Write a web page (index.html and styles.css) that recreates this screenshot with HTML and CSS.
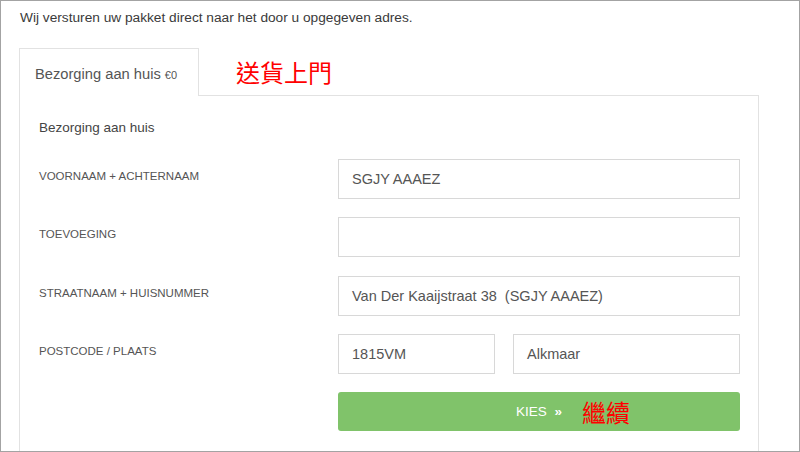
FILE: index.html
```html
<!DOCTYPE html>
<html lang="nl">
<head>
<meta charset="utf-8">
<link rel="stylesheet" href="styles.css">
</head>
<body>
<div class="frame">
  <p class="intro">Wij versturen uw pakket direct naar het door u opgegeven adres.</p>
  <div class="tabs">
    <div class="tab">Bezorging aan huis <span class="price">€0</span></div>
    <div class="tab-fill"><span class="note note-tab">送貨上門</span></div>
  </div>
  <div class="panel">
    <h2 class="panel-title">Bezorging aan huis</h2>
    <div class="form">
      <label class="lbl">VOORNAAM + ACHTERNAAM</label>
      <div class="field">SGJY AAAEZ</div>
      <label class="lbl">TOEVOEGING</label>
      <div class="field"></div>
      <label class="lbl">STRAATNAAM + HUISNUMMER</label>
      <div class="field">Van Der Kaaijstraat 38 &nbsp;(SGJY AAAEZ)</div>
      <label class="lbl">POSTCODE / PLAATS</label>
      <div class="pair">
        <div class="field">1815VM</div>
        <div class="field">Alkmaar</div>
      </div>
      <span></span>
      <div class="btn">
        <span></span>
        <span class="btn-label">KIES <span class="chev">»</span></span>
        <span class="note note-btn">繼續</span>
      </div>
    </div>
  </div>
</div>
</body>
</html>
```
FILE: styles.css
```css
html, body {
  margin: 0;
  padding: 0;
  background: #fff;
}
body {
  font-family: "Liberation Sans", Arial, sans-serif;
  color: #444;
}
.frame {
  width: 800px;
  height: 452px;
  box-sizing: border-box;
  border: 1px solid #a3a3a3;
  padding: 0 40px 0 18px;
  display: flex;
  flex-direction: column;
  overflow: hidden;
}
.intro {
  margin: 0;
  padding: 8px 0 0 1px;
  height: 47px;
  flex: none;
  box-sizing: border-box;
  font-size: 13.7px;
  line-height: 18px;
  color: #3a3a3a;
}
.tabs {
  display: flex;
  height: 48px;
  flex: none;
}
.tab {
  width: 180px;
  box-sizing: border-box;
  border: 1px solid #e2e2e2;
  border-bottom: none;
  padding: 15px 0 0 15px;
  font-size: 14.7px;
  line-height: 20px;
  color: #555;
}
.price {
  font-size: 11px;
}
.tab-fill {
  flex: 1;
  border-bottom: 1px solid #e2e2e2;
  padding: 10px 0 0 37px;
}
.note {
  font-family: "Noto Sans CJK TC", "Noto Sans CJK SC", sans-serif;
  color: #ff0000;
  font-size: 24px;
  line-height: 28px;
}
.panel {
  flex: 1;
  border-left: 1px solid #e2e2e2;
  border-right: 1px solid #e2e2e2;
  padding: 22px 18px 0 19px;
}
.panel-title {
  margin: 0 0 21px;
  font-weight: normal;
  font-size: 13.5px;
  line-height: 20px;
  color: #444;
}
.form {
  display: grid;
  grid-template-columns: 299px 1fr;
  row-gap: 18.3px;
}
.lbl {
  font-size: 11.5px;
  line-height: 14px;
  padding-top: 10px;
  color: #555;
}
.field {
  height: 40px;
  box-sizing: border-box;
  border: 1px solid #d8d8d8;
  padding: 0 13px;
  font-size: 14.5px;
  line-height: 38px;
  color: #555;
}
.pair {
  display: grid;
  grid-template-columns: 157px 1fr;
  column-gap: 18px;
}
.btn {
  height: 39px;
  background: #80c36a;
  border-radius: 3px;
  display: grid;
  grid-template-columns: 1fr auto 1fr;
  align-items: center;
}
.btn-label {
  color: #fff;
  font-size: 13.5px;
  line-height: 20px;
}
.chev {
  margin-left: 4px;
  font-weight: bold;
}
.note-btn {
  padding-left: 20px;
  font-size: 24px;
}
```
